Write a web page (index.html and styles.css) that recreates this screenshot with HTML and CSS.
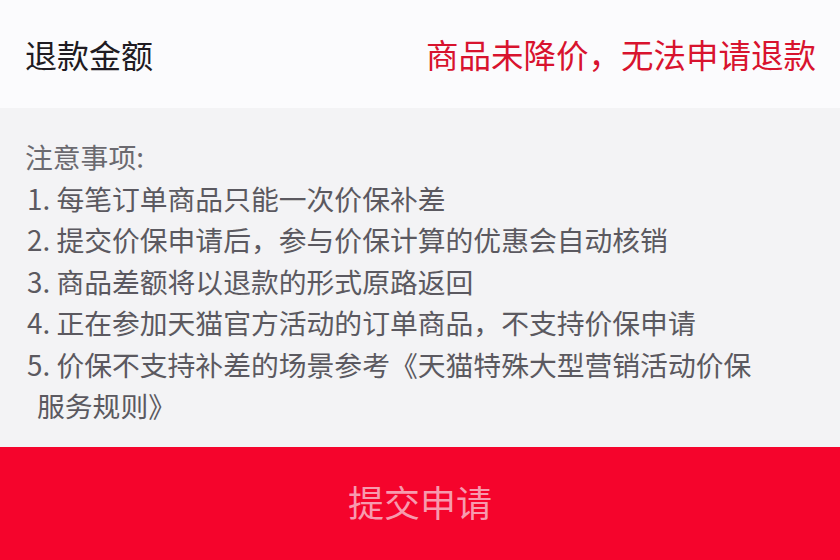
FILE: index.html
```html
<!DOCTYPE html>
<html lang="zh-CN">
<head>
<meta charset="utf-8">
<title>退款金额</title>
<link rel="stylesheet" href="styles.css">
</head>
<body>
<div class="page">
  <div class="header">
    <span class="title">退款金额</span>
    <span class="warn">商品未降价，无法申请退款</span>
  </div>
  <div class="notes">
    <div class="notes-title">注意事项:</div>
    <div class="item">1. 每笔订单商品只能一次价保补差</div>
    <div class="item">2. 提交价保申请后，参与价保计算的优惠会自动核销</div>
    <div class="item">3. 商品差额将以退款的形式原路返回</div>
    <div class="item">4. 正在参加天猫官方活动的订单商品，不支持价保申请</div>
    <div class="item">5. 价保不支持补差的场景参考《天猫特殊大型营销活动价保服务规则》</div>
  </div>
  <div class="submit">提交申请</div>
</div>
</body>
</html>
```
FILE: styles.css
```css
html, body {
  margin: 0;
  padding: 0;
}
body {
  width: 840px;
  height: 560px;
  overflow: hidden;
  font-family: "Noto Sans CJK SC", "Noto Sans", sans-serif;
  background: #f3f3f5;
}
.page {
  display: flex;
  flex-direction: column;
  height: 560px;
}
.header {
  height: 108px;
  flex: none;
  background: #fbfbfd;
  display: flex;
  align-items: center;
  justify-content: space-between;
  padding: 0 24px 0 25px;
  box-sizing: border-box;
}
.title {
  font-size: 32px;
  color: #1f1b22;
  line-height: 1;
}
.warn {
  font-size: 32.5px;
  color: #d8132e;
  line-height: 1;
}
.notes {
  flex: 1;
  background: #f3f3f5;
  padding: 28px 60px 0 25px;
  color: #5b5960;
  font-size: 27.8px;
  line-height: 41.5px;
  box-sizing: border-box;
}
.notes-title {
  color: #6b6a70;
}
.item {
  padding-left: 12px;
  text-indent: -10px;
  max-width: 728px;
}
.submit {
  height: 113px;
  flex: none;
  background: #f5042c;
  color: #f79aae;
  font-size: 36px;
  display: flex;
  align-items: center;
  justify-content: center;
  padding-bottom: 5px;
  box-sizing: border-box;
}
```
